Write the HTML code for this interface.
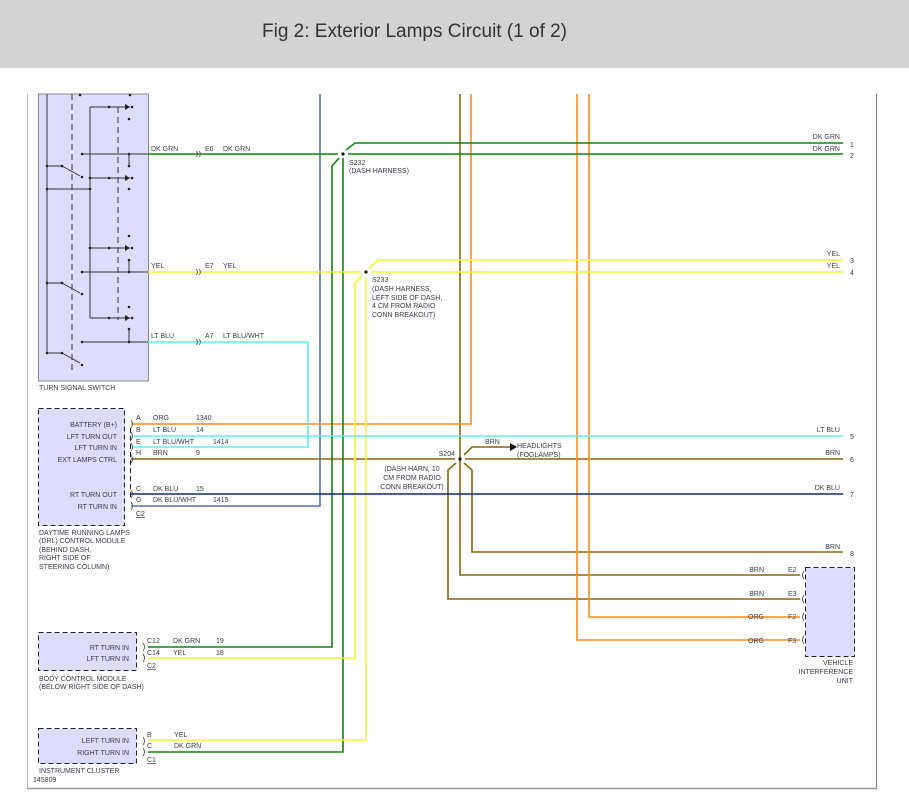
<!DOCTYPE html>
<html><head><meta charset="utf-8"><style>
html,body{margin:0;padding:0;background:#fff;width:909px;height:794px;overflow:hidden}
svg{display:block}
text{font-family:"Liberation Sans",Arial,sans-serif;font-size:7px;fill:#3a3a4a}
</style></head><body>
<svg width="909" height="794" viewBox="0 0 909 794" xmlns="http://www.w3.org/2000/svg">
<rect x="0" y="0" width="909" height="68" fill="#d3d3d3"/>
<text x="262" y="37" textLength="305" style="font-size:19px;fill:#333">Fig 2: Exterior Lamps Circuit (1 of 2)</text>
<!-- frame -->
<line x1="27.5" y1="94" x2="27.5" y2="788" stroke="#bbb"/>
<line x1="876.5" y1="94" x2="876.5" y2="788" stroke="#777"/>
<line x1="27" y1="788.5" x2="877" y2="788.5" stroke="#999" stroke-width="1.5"/>

<!-- turn signal switch -->
<rect x="38.5" y="94" width="110" height="287" fill="#dcdcfc" stroke="#888"/>
<g stroke="#333" stroke-width="1" fill="none">
<line x1="47" y1="94" x2="47" y2="353"/>
<line x1="72" y1="94" x2="72" y2="372" stroke-dasharray="6,4"/>
<line x1="118" y1="107" x2="118" y2="320" stroke-dasharray="6,4"/>
<line x1="90" y1="107" x2="90" y2="318"/>
<line x1="90" y1="107" x2="130" y2="107"/>
<line x1="82" y1="154" x2="148" y2="154"/>
<line x1="129" y1="154" x2="129" y2="166"/>
<line x1="47" y1="166" x2="62" y2="166"/><line x1="62" y1="166" x2="80" y2="176"/>
<line x1="90" y1="178" x2="130" y2="178"/>
<line x1="47" y1="189" x2="90" y2="189"/>
<line x1="90" y1="248" x2="130" y2="248"/>
<line x1="82" y1="272" x2="148" y2="272"/>
<line x1="129" y1="261" x2="129" y2="272"/>
<line x1="47" y1="283" x2="62" y2="283"/><line x1="62" y1="283" x2="80" y2="293"/>
<line x1="90" y1="318" x2="130" y2="318"/>
<line x1="82" y1="342" x2="148" y2="342"/>
<line x1="129" y1="330" x2="129" y2="342"/>
<line x1="47" y1="353" x2="62" y2="353"/><line x1="62" y1="353" x2="80" y2="363"/>
</g>
<g fill="#222">
<circle cx="130" cy="95" r="1.3"/><circle cx="80" cy="95" r="1.3"/>
<circle cx="109" cy="107" r="1.3"/><circle cx="132" cy="107" r="1.3"/><circle cx="129" cy="119" r="1.3"/>
<circle cx="82" cy="154" r="1.3"/><circle cx="129" cy="154" r="1.3"/><circle cx="129" cy="166" r="1.3"/>
<circle cx="47" cy="166" r="1.3"/><circle cx="62" cy="166" r="1.3"/><circle cx="82" cy="177" r="1.3"/>
<circle cx="90" cy="178" r="1.3"/><circle cx="109" cy="178" r="1.3"/><circle cx="132" cy="178" r="1.3"/><circle cx="129" cy="189" r="1.3"/>
<circle cx="47" cy="189" r="1.3"/><circle cx="90" cy="189" r="1.3"/>
<circle cx="129" cy="236" r="1.3"/><circle cx="109" cy="248" r="1.3"/><circle cx="132" cy="248" r="1.3"/><circle cx="90" cy="248" r="1.3"/>
<circle cx="129" cy="260" r="1.3"/><circle cx="82" cy="272" r="1.3"/><circle cx="129" cy="272" r="1.3"/>
<circle cx="47" cy="283" r="1.3"/><circle cx="62" cy="283" r="1.3"/><circle cx="82" cy="294" r="1.3"/>
<circle cx="129" cy="307" r="1.3"/><circle cx="109" cy="318" r="1.3"/><circle cx="132" cy="318" r="1.3"/>
<circle cx="129" cy="329" r="1.3"/><circle cx="82" cy="342" r="1.3"/><circle cx="129" cy="342" r="1.3"/>
<circle cx="47" cy="353" r="1.3"/><circle cx="62" cy="353" r="1.3"/><circle cx="82" cy="365" r="1.3"/>
<path d="M125 104 L130 107 L125 110Z"/><path d="M125 175 L130 178 L125 181Z"/><path d="M125 245 L130 248 L125 251Z"/><path d="M125 315 L130 318 L125 321Z"/>
</g>
<text x="39" y="390">TURN SIGNAL SWITCH</text>

<!-- wires -->
<g fill="none" stroke-width="1.6">
<!-- blue 1415 -->
<polyline points="320,94 320,506 131,506" stroke="#5a6bb8"/>
<!-- browns -->
<polyline points="460,94 460,575 800,575" stroke="#8b6508"/>
<polyline points="131,459 455,459" stroke="#8b6508"/>
<polyline points="465,459 843,459" stroke="#8b6508"/>
<polyline points="456,463 448,470 448,599 800,599" stroke="#8b6508"/>
<polyline points="464,463 472,470 472,552 843,552" stroke="#8b6508"/>
<polyline points="464,455 472,447 510,447" stroke="#8b6508"/>
<!-- oranges -->
<polyline points="471,94 471,424 131,424" stroke="#ff8c1a"/>
<polyline points="577,94 577,640 800,640" stroke="#ff8c1a"/>
<polyline points="589,94 589,617 800,617" stroke="#ff8c1a"/>
<!-- dk grn -->
<polyline points="148,154 338,154" stroke="#0a8a0a"/>
<polyline points="348,154 843,154" stroke="#0a8a0a"/>
<polyline points="346,150 355,143 843,143" stroke="#0a8a0a"/>
<polyline points="339,158 332,166 332,647 148,647" stroke="#0a8a0a"/>
<polyline points="343,158 343,752 148,752" stroke="#0a8a0a"/>
<!-- yellow -->
<polyline points="148,272 361,272" stroke="#f5f530"/>
<polyline points="371,272 843,272" stroke="#f5f530"/>
<polyline points="369,268 378,260 843,260" stroke="#f5f530"/>
<polyline points="362,276 355,283 355,658 148,658" stroke="#f5f530"/>
<polyline points="366,278 366,740 148,740" stroke="#f5f530"/>
<!-- lt blu -->
<polyline points="148,342 308,342 308,447 131,447" stroke="#5cf0f0"/>
<polyline points="131,436 843,436" stroke="#5cf0f0"/>
<!-- dk blu -->
<polyline points="131,494 843,494" stroke="#0a2a8a"/>
</g>
<path d="M510 443 L517 447 L510 451Z" fill="#111"/>
<circle cx="343" cy="154" r="1.6" fill="#111"/>
<circle cx="366" cy="272" r="1.6" fill="#111"/>
<circle cx="460" cy="459" r="1.6" fill="#111"/>

<!-- connector marks -->
<g fill="none" stroke="#555" stroke-width="0.8">
<path d="M196 151 q3 3 0 6 M199 151 q3 3 0 6"/>
<path d="M196 269 q3 3 0 6 M199 269 q3 3 0 6"/>
<path d="M196 339 q3 3 0 6 M199 339 q3 3 0 6"/>
</g>

<!-- labels top -->
<text x="151" y="151">DK GRN</text><text x="205" y="151">E6</text><text x="223" y="151">DK GRN</text>
<text x="151" y="268">YEL</text><text x="205" y="268">E7</text><text x="223" y="268">YEL</text>
<text x="151" y="338">LT BLU</text><text x="205" y="338">A7</text><text x="223" y="338">LT BLU/WHT</text>
<text x="349" y="165">S232</text><text x="349" y="173">(DASH HARNESS)</text>
<text x="372" y="282">S233</text><text x="372" y="291">(DASH HARNESS,</text><text x="372" y="300">LEFT SIDE OF DASH,</text><text x="372" y="308">4 CM FROM RADIO</text><text x="372" y="317">CONN BREAKOUT)</text>
<g text-anchor="end">
<text x="840" y="139">DK GRN</text><text x="840" y="151">DK GRN</text>
<text x="840" y="256">YEL</text><text x="840" y="268">YEL</text>
<text x="840" y="432">LT BLU</text><text x="840" y="455">BRN</text><text x="840" y="490">DK BLU</text><text x="840" y="549">BRN</text>
</g>
<text x="850" y="147">1</text><text x="850" y="158">2</text><text x="850" y="263">3</text><text x="850" y="275">4</text>
<text x="850" y="439">5</text><text x="850" y="462">6</text><text x="850" y="497">7</text><text x="850" y="556">8</text>

<!-- DRL -->
<rect x="38.5" y="408.5" width="86" height="117" fill="#dcdcfc" stroke="#222" stroke-dasharray="5,3"/>
<line x1="130.5" y1="428" x2="130.5" y2="500" stroke="#222" stroke-dasharray="5,3"/>
<g fill="none" stroke="#444" stroke-width="0.8">
<path d="M131 420 q3 4 0 8"/><path d="M131 432 q3 4 0 8"/><path d="M131 443 q3 4 0 8"/><path d="M131 455 q3 4 0 8"/><path d="M131 490 q3 4 0 8"/><path d="M131 502 q3 4 0 8"/>
</g>
<g text-anchor="end">
<text x="117" y="427">BATTERY (B+)</text><text x="117" y="439">LFT TURN OUT</text><text x="117" y="450">LFT TURN IN</text><text x="117" y="462">EXT LAMPS CTRL</text>
<text x="117" y="497">RT TURN OUT</text><text x="117" y="509">RT TURN IN</text>
</g>
<text x="136" y="420">A</text><text x="153" y="420">ORG</text><text x="196" y="420">1340</text>
<text x="136" y="432">B</text><text x="153" y="432">LT BLU</text><text x="196" y="432">14</text>
<text x="136" y="444">E</text><text x="153" y="444">LT BLU/WHT</text><text x="213" y="444">1414</text>
<text x="136" y="455">H</text><text x="153" y="455">BRN</text><text x="196" y="455">9</text>
<text x="136" y="491">C</text><text x="153" y="491">DK BLU</text><text x="196" y="491">15</text>
<text x="136" y="502">G</text><text x="153" y="502">DK BLU/WHT</text><text x="213" y="502">1415</text>
<text x="136" y="516" text-decoration="underline">C2</text>
<text x="39" y="535">DAYTIME RUNNING LAMPS</text><text x="39" y="543">(DRL) CONTROL MODULE</text><text x="39" y="552">(BEHIND DASH,</text><text x="39" y="560">RIGHT SIDE OF</text><text x="39" y="569">STEERING COLUMN)</text>

<!-- S204 -->
<text x="455" y="456" text-anchor="end">S204</text>
<text x="485" y="444">BRN</text>
<text x="517" y="448">HEADLIGHTS</text><text x="517" y="457">(FOGLAMPS)</text>
<g text-anchor="middle"><text x="412" y="471">(DASH HARN, 10</text><text x="412" y="480">CM FROM RADIO</text><text x="412" y="489">CONN BREAKOUT)</text></g>

<!-- BCM -->
<rect x="38.5" y="632.5" width="98" height="38" fill="#dcdcfc" stroke="#222" stroke-dasharray="5,3"/>
<g fill="none" stroke="#444" stroke-width="0.8"><path d="M143 643 q3 4 0 8"/><path d="M143 654 q3 4 0 8"/><path d="M143 737 q3 4 0 8"/><path d="M143 748 q3 4 0 8"/></g>
<g text-anchor="end"><text x="129" y="650">RT TURN IN</text><text x="129" y="661">LFT TURN IN</text></g>
<text x="147" y="643">C12</text><text x="173" y="643">DK GRN</text><text x="216" y="643">19</text>
<text x="147" y="655">C14</text><text x="173" y="655">YEL</text><text x="216" y="655">18</text>
<text x="147" y="668" text-decoration="underline">C2</text>
<text x="39" y="681">BODY CONTROL MODULE</text><text x="39" y="689">(BELOW RIGHT SIDE OF DASH)</text>

<!-- IC -->
<rect x="38.5" y="728.5" width="98" height="35" fill="#dcdcfc" stroke="#222" stroke-dasharray="5,3"/>
<g text-anchor="end"><text x="129" y="743">LEFT TURN IN</text><text x="129" y="755">RIGHT TURN IN</text></g>
<text x="147" y="737">B</text><text x="174" y="737">YEL</text>
<text x="147" y="748">C</text><text x="174" y="748">DK GRN</text>
<text x="147" y="762" text-decoration="underline">C1</text>
<text x="39" y="773">INSTRUMENT CLUSTER</text>
<text x="33" y="782">145809</text>

<!-- VIU -->
<rect x="805.5" y="567.5" width="49" height="89" fill="#dcdcfc" stroke="#222" stroke-dasharray="5,3"/>
<g fill="none" stroke="#444" stroke-width="0.8"><path d="M804 571 q-3 4 0 8"/><path d="M804 595 q-3 4 0 8"/><path d="M804 613 q-3 4 0 8"/><path d="M804 636 q-3 4 0 8"/></g>
<text x="788" y="572">E2</text><text x="788" y="596">E3</text><text x="788" y="619">F2</text><text x="788" y="643">F3</text>
<g text-anchor="end"><text x="764" y="572">BRN</text><text x="764" y="596">BRN</text><text x="764" y="619">ORG</text><text x="764" y="643">ORG</text>
<text x="853" y="665">VEHICLE</text><text x="853" y="674">INTERFERENCE</text><text x="853" y="683">UNIT</text></g>
</svg>
</body></html>
